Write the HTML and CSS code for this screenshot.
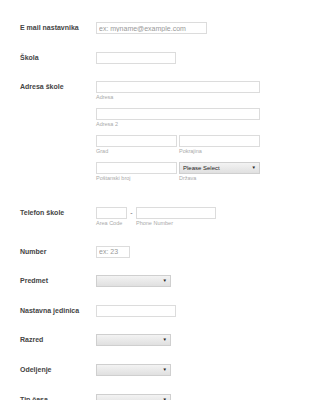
FILE: index.html
```html
<!DOCTYPE html>
<html lang="sr">
<head>
    <meta charset="UTF-8">
    <meta name="viewport" content="width=device-width, initial-scale=1.0">
    <title>Forma</title>
    <link rel="stylesheet" href="styles.css">
</head>
<body>

    <form class="form">
        <div class="form-line">
            <label class="form-label">E mail nastavnika</label>
            <input class="field field-email" type="text" placeholder="ex: myname@example.com">
        </div>

        <div class="form-line">
            <label class="form-label">Škola</label>
            <input class="field field-medium" type="text">
        </div>

        <div class="form-line form-line-address">
            <label class="form-label">Adresa škole</label>
            <div class="address">
                <div class="sub wide">
                    <input class="field" type="text">
                    <span class="sublabel">Adresa</span>
                </div>
                <div class="sub wide">
                    <input class="field" type="text">
                    <span class="sublabel">Adresa 2</span>
                </div>
                <div class="sub">
                    <input class="field" type="text">
                    <span class="sublabel">Grad</span>
                </div>
                <div class="sub">
                    <input class="field" type="text">
                    <span class="sublabel">Pokrajina</span>
                </div>
                <div class="sub">
                    <input class="field" type="text">
                    <span class="sublabel">Poštanski broj</span>
                </div>
                <div class="sub">
                    <span class="select-wrap">
                        <select class="field select select-country">
                            <option>Please Select</option>
                        </select>
                    </span>
                    <span class="sublabel">Država</span>
                </div>
            </div>
        </div>

        <div class="form-line form-line-phone">
            <label class="form-label">Telefon škole</label>
            <div class="sub">
                <input class="field field-area" type="text">
                <span class="sublabel">Area Code</span>
            </div>
            <span class="dash">-</span>
            <div class="sub">
                <input class="field field-medium" type="text">
                <span class="sublabel">Phone Number</span>
            </div>
        </div>

        <div class="form-line">
            <label class="form-label">Number</label>
            <input class="field field-number" type="text" placeholder="ex: 23">
        </div>

        <div class="form-line">
            <label class="form-label">Predmet</label>
            <span class="select-wrap">
                <select class="field select"><option></option></select>
            </span>
        </div>

        <div class="form-line">
            <label class="form-label">Nastavna jedinica</label>
            <input class="field field-medium" type="text">
        </div>

        <div class="form-line">
            <label class="form-label">Razred</label>
            <span class="select-wrap">
                <select class="field select"><option></option></select>
            </span>
        </div>

        <div class="form-line">
            <label class="form-label">Odeljenje</label>
            <span class="select-wrap">
                <select class="field select"><option></option></select>
            </span>
        </div>

        <div class="form-line">
            <label class="form-label">Tip časa</label>
            <span class="select-wrap">
                <select class="field select"><option></option></select>
            </span>
        </div>
    </form>

</body>
</html>
```

FILE: styles.css
```css
:root {
    --label-color: #444;
    --border-color: #dcdcdc;
    --sublabel-color: #aaa;
    --placeholder-color: #999;
}

body {
    font-family: 'Liberation Sans', Arial, sans-serif;
    background-color: #fff;
    margin: 0;
}

.form {
    padding: 22px 0 0 20px;
}

.form-line {
    display: flex;
    align-items: flex-start;
    margin-bottom: 17.6px;
}

.form-label {
    width: 76px;
    flex-shrink: 0;
    font-size: 7px;
    font-weight: bold;
    color: var(--label-color);
    line-height: 12px;
}

.field {
    box-sizing: border-box;
    height: 12px;
    margin: 0;
    padding: 0 2px;
    border: 1px solid var(--border-color);
    background-color: #fff;
    font-family: inherit;
    font-size: 7px;
    line-height: 10px;
    color: #555;
    outline: none;
}

.field::placeholder {
    color: var(--placeholder-color);
}

.field-email {
    width: 111px;
}

.field-medium {
    width: 80px;
}

.field-area {
    width: 31px;
}

.field-number {
    width: 34px;
}

/* adres blok */
.address {
    display: grid;
    grid-template-columns: 81px 81px;
    column-gap: 2px;
}

.sub {
    display: flex;
    flex-direction: column;
}

.address .sub {
    margin-bottom: 6.7px;
}

.address .sub.wide {
    grid-column: 1 / 3;
}

.address .field {
    width: 100%;
}

.sublabel {
    font-size: 5.5px;
    line-height: 8.3px;
    color: var(--sublabel-color);
}

.form-line-phone {
    margin-bottom: 18.6px;
}

.dash {
    width: 9px;
    text-align: center;
    font-size: 7px;
    line-height: 12px;
    color: #666;
}

/* selecti */
.select-wrap {
    position: relative;
    display: flex;
    height: 12px;
}

.select {
    -webkit-appearance: none;
    appearance: none;
    width: 75px;
    height: 12px;
    border-color: #cfcfcf;
    background: linear-gradient(#f3f3f3, #e0e0e0);
    padding: 0 10px 0 3px;
    font-size: 6px;
}

.select-country {
    width: 81px;
    color: #222;
}

.address .select-wrap .field {
    width: 81px;
}

.select-wrap::after {
    content: "\25BC";
    position: absolute;
    right: 4px;
    top: 3px;
    font-size: 4.5px;
    line-height: 6px;
    color: #222;
    pointer-events: none;
}
```
